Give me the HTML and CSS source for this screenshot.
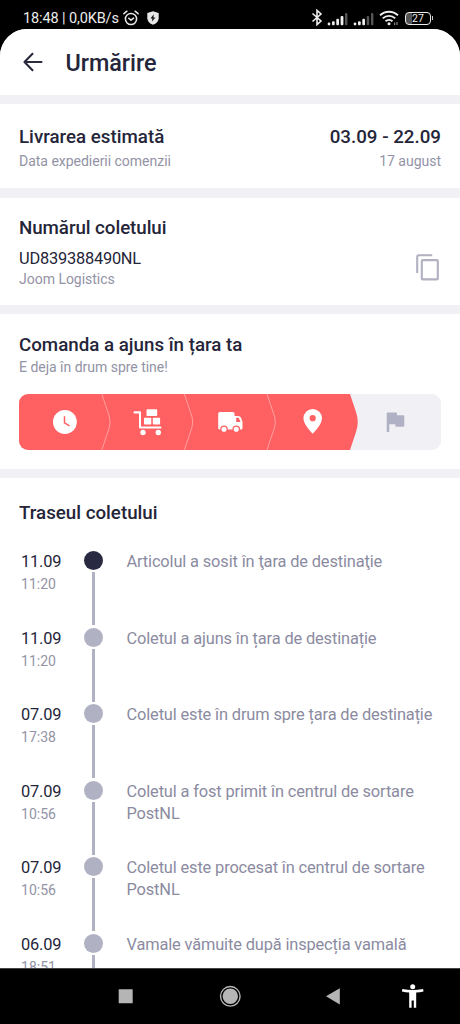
FILE: index.html
```html
<!DOCTYPE html>
<html lang="ro">
<head>
<meta charset="utf-8">
<meta name="viewport" content="width=device-width, initial-scale=1">
<title>Urmărire</title>
<link rel="stylesheet" href="styles.css">
</head>
<body>
<div class="screen">
  <header class="status">
    <div class="status-left">
      <span class="status-text">18:48 | 0,0KB/s</span>
      <svg class="alarm" width="16" height="16" viewBox="0 0 16 16" fill="none" stroke="#e8e8e8" stroke-width="1.5" stroke-linecap="round" stroke-linejoin="round"><circle cx="8" cy="9" r="5.6"/><path d="M.9 3.7 3.9 1.2M15.1 3.7 12.1 1.2M5.8 8.2 8 10.1l2.5-2"/></svg>
      <svg class="shield" width="12" height="14" viewBox="0 0 12 14"><path fill="#e8e8e8" d="M6 .3 11.7 2v5.2c0 3-2.400 5.300-5.700 6.500C2.700 12.500.3 10.200.3 7.200V2z"/><path fill="#111" d="M6.700 3.200 3.500 7.500h2L4.800 10.800 8.400 6.400h-2z"/></svg>
    </div>
    <div class="status-right">
      <svg class="bluetooth" width="12" height="17" viewBox="0 0 12 17" fill="none" stroke="#eee" stroke-width="1.600"><path d="M1.500 4.500 10 12 6 15.600V1.400L10 5 1.500 12.500"/></svg>
      <svg class="signal" width="21" height="14" viewBox="0 0 21 14" fill="#eee"><circle cx="2" cy="12" r="1.400"/><rect x="5" y="9.300" width="2.700" height="4" rx="1"/><rect x="9.300" y="6.800" width="2.700" height="6.500" rx="1"/><rect x="13.600" y="4" width="2.800" height="9.300" rx="1"/><rect x="18" y="1" width="2.400" height="12.300" rx="1" fill="#555"/></svg>
      <svg class="signal signal-second" width="21" height="14" viewBox="0 0 21 14" fill="#eee"><circle cx="2" cy="12" r="1.400"/><rect x="5" y="9.300" width="2.700" height="4" rx="1"/><rect x="9.300" y="6.800" width="2.700" height="6.500" rx="1"/><rect x="13.700" y="4" width="2.500" height="9.300" rx="1" fill="#555"/><rect x="18" y="1" width="2.400" height="12.300" rx="1" fill="#555"/></svg>
      <svg class="wifi" width="20" height="16" viewBox="0 0 20 16" fill="none" stroke="#eee" stroke-width="1.900"><path d="M1 5.300a13 13 0 0 1 18 0M3.800 8.400a9 9 0 0 1 12.400 0M6.500 11.300a5.300 5.300 0 0 1 7 0"/><circle cx="10" cy="13.800" r="1.500" fill="#eee" stroke="none"/><path d="M15.600 12.500v2.500M18 12v3" stroke="#888" stroke-width="1.200"/></svg>
      <div class="battery"><span>27</span></div>
    </div>
  </header>
  <main class="app">
    <div class="topbar">
      <svg class="back" width="20" height="20" viewBox="0 0 20 20" fill="none" stroke="#2b2b40" stroke-width="2.100" stroke-linecap="round" stroke-linejoin="round"><path d="M18.500 10H1.800M9.500 1.800 1.500 10l8 8.200"/></svg>
      <h1>Urmărire</h1>
    </div>
    <section class="card estimate">
      <div class="row"><h2>Livrarea estimată</h2><h2>03.09 - 22.09</h2></div>
      <div class="row small"><span>Data expedierii comenzii</span><span>17 august</span></div>
    </section>
    <section class="card parcel">
      <div>
        <h2>Numărul coletului</h2>
        <p class="number">UD839388490NL</p>
        <p class="small">Joom Logistics</p>
      </div>
      <svg class="copy" width="24" height="28" viewBox="0 0 24 28" fill="none" stroke="#b1b1c2" stroke-width="2.100" stroke-linejoin="round"><path d="M17.200 2.300H3.800Q2.200 2.300 2.200 3.900V20"/><rect x="6.800" y="7.100" width="16" height="19.300" rx="1"/></svg>
    </section>
    <section class="card progress">
      <h2>Comanda a ajuns în țara ta</h2>
      <p class="small">E deja în drum spre tine!</p>
      <div class="stages">
        <svg width="423" height="56" viewBox="0 0 423 56">
          <path fill="#ff6062" d="M0 0H331L337 18Q340.500 28 337 38L331 56H0z"/>
          <g fill="none" stroke="#ffa09e" stroke-width="1"><path d="M82.800 0 88.800 18Q93.300 28 88.800 38L82.800 56"/><path d="M165.400 0 171.400 18Q175.900 28 171.400 38L165.400 56"/><path d="M248 0 254 18Q258.500 28 254 38L248 56"/></g>
          <circle cx="45.900" cy="28" r="11.900" fill="#fff"/><path d="M45.500 22.300v6.500l5 3" fill="none" stroke="#ff6062" stroke-width="1.500"/>
          <g fill="#fff"><path d="M115.500 17.300h5.500q1 0 1 1V32.500h19.500q1 0 1 1t-1 1h-20.500q-1 0-1-1V19.500h-4.500q-1 0-1-1.100t1-1.100z"/><rect x="127.500" y="15.200" width="10.700" height="6.800" rx=".8"/><rect x="125" y="23.700" width="7.300" height="6.800" rx=".8"/><rect x="133.800" y="23.700" width="7.300" height="6.800" rx=".8"/><circle cx="124" cy="38.500" r="2.700"/><circle cx="139.300" cy="38.500" r="2.700"/></g>
          <path fill="#fff" d="M201 18h13q1.500 0 1.500 1.500V22h3.700q2 0 2.700 1.500l1.600 4.200V34q0 1.500-1.500 1.500H200.700q-1.500 0-1.500-1.500V19.500Q199.200 18 201 18z"/>
          <path fill="#ff6062" d="M217.200 23.700h2.500l1.900 4.300h-4.400z"/>
          <g fill="#fff" stroke="#ff6062" stroke-width="1.300"><circle cx="205" cy="35.300" r="3.200"/><circle cx="217.300" cy="35.300" r="3.200"/></g>
          <path fill="#fff" fill-rule="evenodd" d="M293.700 15a9.300 9.300 0 0 0-9.300 9.300c0 6.700 9.300 15.400 9.300 15.400s9.300-8.700 9.300-15.400a9.300 9.300 0 0 0-9.300-9.300m0 6.100a3.100 3.100 0 1 1 0 6.200 3.100 3.100 0 0 1 0-6.200"/>
          <path fill="#b1b1c6" d="M368.700 18.500h8.300q1 0 1 1v1.700h6.300q1 0 1 1v9.500q0 1-1 1h-7q-1 0-1-1v-1.500h-6V38h-2.600V19.500q0-1 1-1z"/>
        </svg>
      </div>
    </section>
    <section class="card route">
      <h2>Traseul coletului</h2>
      <ol class="timeline">
        <li class="event current"><div class="when"><b>11.09</b><span>11:20</span></div><div class="track"><i class="dot"></i><i class="line"></i></div><p>Articolul a sosit în ţara de destinaţie</p></li>
        <li class="event"><div class="when"><b>11.09</b><span>11:20</span></div><div class="track"><i class="dot"></i><i class="line"></i></div><p>Coletul a ajuns în țara de destinație</p></li>
        <li class="event"><div class="when"><b>07.09</b><span>17:38</span></div><div class="track"><i class="dot"></i><i class="line"></i></div><p>Coletul este în drum spre țara de destinație</p></li>
        <li class="event"><div class="when"><b>07.09</b><span>10:56</span></div><div class="track"><i class="dot"></i><i class="line"></i></div><p>Coletul a fost primit în centrul de sortare PostNL</p></li>
        <li class="event"><div class="when"><b>07.09</b><span>10:56</span></div><div class="track"><i class="dot"></i><i class="line"></i></div><p>Coletul este procesat în centrul de sortare PostNL</p></li>
        <li class="event"><div class="when"><b>06.09</b><span>18:51</span></div><div class="track"><i class="dot"></i><i class="line"></i></div><p>Vamale vămuite după inspecția vamală</p></li>
      </ol>
    </section>
  </main>
  <nav class="navbar">
    <svg width="460" height="56" viewBox="0 0 460 56">
      <rect x="118.700" y="21.200" width="14" height="14" rx=".5" fill="#b5b5b5"/>
      <circle cx="230.300" cy="28.300" r="9.800" fill="none" stroke="#b5b5b5" stroke-width="1.400"/><circle cx="230.300" cy="28.300" r="7.700" fill="#b5b5b5"/>
      <path d="M326 28.300 339.800 20.300V36.500z" fill="#b5b5b5"/>
      <circle cx="412.700" cy="18.800" r="2.500" fill="#fff"/><path fill="#fff" d="M402.300 21.100q10.400 2 20.800 0l.4 2.300q-3.600.9-7.300 1.100V39.800h-2.400v-7.300h-2.200v7.300h-2.400V24.500q-3.600-.2-7.300-1.100z"/>
    </svg>
  </nav>
</div>
</body>
</html>
```

FILE: styles.css
```css
* { box-sizing: border-box; margin: 0; padding: 0; }
body { background: #000; font-family: Roboto, sans-serif; color: #25253a; }
.screen { width: 460px; height: 1024px; display: flex; flex-direction: column; overflow: hidden; background: #000; }

.status { height: 29px; flex: none; display: flex; justify-content: space-between; padding: 0 25px 0 23px; color: #ececec; }
.status-left, .status-right { display: flex; align-items: flex-start; }
.status-text { font-size: 14.500px; line-height: 17px; padding-top: 10px; width: 97px; white-space: nowrap; letter-spacing: -.12px; }
.alarm { margin: 10px 0 0 3px; }
.shield { margin: 11px 0 0 8px; }
.bluetooth { margin-top: 9px; }
.signal { margin: 11.500px 0 0 4px; }
.signal-second { margin-left: 5px; }
.wifi { margin: 10px 0 0 5px; }
.battery { position: relative; width: 26px; height: 13px; margin: 11.500px 4px 0 6.500px; border: 1.500px solid #eee; border-radius: 4px; background: linear-gradient(90deg, #555 27%, #000 27%); font-size: 10.500px; line-height: 12px; text-align: center; }
.battery::after { content: ""; position: absolute; right: -3px; top: 3px; width: 1.500px; height: 4px; background: #ccc; }

.app { flex: 1; min-height: 0; overflow: hidden; display: flex; flex-direction: column; gap: 9.400px; background: #f1f1f5; border-radius: 27px 27px 0 0; }
.topbar { height: 66px; flex: none; background: #fff; display: flex; align-items: center; gap: 22.500px; padding-left: 23px; }
h1 { font-size: 23.400px; font-weight: 500; line-height: 28px; letter-spacing: -.05px; padding-top: 1px; }
h2 { font-size: 18.740px; font-weight: 500; line-height: 22px; }
.small { font-size: 14.060px; line-height: 17px; color: #9393a6; letter-spacing: -.04px; }
.card { flex: none; background: #fff; padding: 0 19px; }
.row { display: flex; justify-content: space-between; }
.estimate { height: 84px; padding-top: 21.500px; }
.estimate .small { margin-top: 5px; }
.parcel { height: 107.300px; padding-top: 19.500px; display: flex; justify-content: space-between; }
.parcel h2 { letter-spacing: -.06px; }
.number { font-size: 16.400px; line-height: 20px; margin-top: 9.500px; letter-spacing: -.22px; }
.parcel .small { margin-top: 2px; }
.copy { margin: 36px 2px 0 0; }
.progress { height: 154.500px; padding-top: 19.500px; }
.progress .small { margin-top: 3px; }
.stages { width: 422px; height: 56px; margin-top: 18.500px; background: #f1f1f5; border-radius: 9px; overflow: hidden; }
.stages svg { display: block; }
.route { flex: 1 0 auto; padding-top: 23.500px; }
.timeline { list-style: none; margin-top: 27.400px; }
.event { display: grid; grid-template-columns: 65px 19px 1fr; height: 76.500px; }
.when { padding: 1px 0 0 2px; }
.when b { display: block; font-weight: 400; font-size: 16.400px; line-height: 20px; letter-spacing: -.16px; }
.when span { display: block; font-size: 14.060px; line-height: 17px; color: #9393a6; margin-top: 4px; }
.track { display: flex; flex-direction: column; align-items: center; gap: 2px; }
.dot { width: 19px; height: 19px; flex: none; border-radius: 50%; background: #b1b1c4; }
.current .dot { background: #292941; }
.line { width: 2.400px; height: 53px; background: #b1b1c4; }
.event p { margin-right: -10px; padding: 0 0 0 23.500px; font-size: 16.400px; line-height: 22px; letter-spacing: -.14px; color: #8b8ba1; }

.navbar { height: 56px; flex: none; background: #000; border-top: 1px solid #444; }
.navbar svg { display: block; margin-top: -1px; }
```
